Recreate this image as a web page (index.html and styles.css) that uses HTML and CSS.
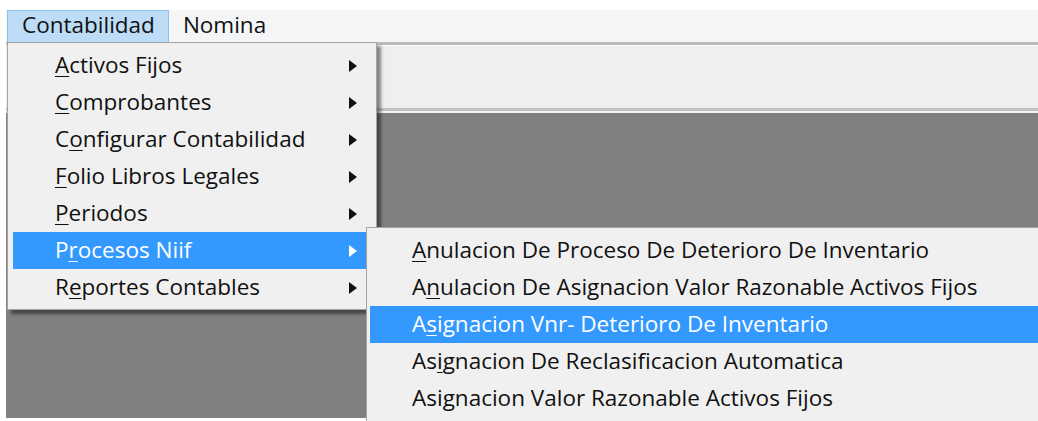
FILE: index.html
```html
<!DOCTYPE html>
<html lang="es">
<head>
<meta charset="utf-8">
<title>Contabilidad</title>
<link rel="stylesheet" href="styles.css">
</head>
<body>
<div class="app">
  <div class="menubar">
    <span class="mb-item active">Contabilidad</span>
    <span class="mb-item">Nomina</span>
  </div>
  <div class="toolbar"></div>
  <div class="workspace"></div>
</div>

<ul class="menu main-menu">
  <li class="item has-sub"><span><u>A</u>ctivos Fijos</span><i class="arrow"></i></li>
  <li class="item has-sub"><span><u>C</u>omprobantes</span><i class="arrow"></i></li>
  <li class="item has-sub"><span>C<u>o</u>nfigurar Contabilidad</span><i class="arrow"></i></li>
  <li class="item has-sub"><span><u>F</u>olio Libros Legales</span><i class="arrow"></i></li>
  <li class="item has-sub"><span><u>P</u>eriodos</span><i class="arrow"></i></li>
  <li class="item has-sub selected"><span>P<u>r</u>ocesos Niif</span><i class="arrow"></i></li>
  <li class="item has-sub"><span>R<u>e</u>portes Contables</span><i class="arrow"></i></li>
</ul>

<ul class="menu sub-menu">
  <li class="item"><span><u>A</u>nulacion De Proceso De Deterioro De Inventario</span></li>
  <li class="item"><span>A<u>n</u>ulacion De Asignacion Valor Razonable Activos Fijos</span></li>
  <li class="item selected"><span>A<u>s</u>ignacion Vnr- Deterioro De Inventario</span></li>
  <li class="item"><span>As<u>i</u>gnacion De Reclasificacion Automatica</span></li>
  <li class="item"><span>Asi<u>g</u>nacion Valor Razonable Activos Fijos</span></li>
</ul>
</body>
</html>
```

FILE: styles.css
```css
html, body {
  margin: 0;
  padding: 0;
  height: 100%;
  overflow: hidden;
  background: #ffffff;
  font-family: "Open Sans", "Noto Sans", sans-serif;
  font-size: 22.5px;
  color: #111111;
}

.app {
  margin: 10px 0 0 6px;
  height: calc(100% - 13px);
  display: flex;
  flex-direction: column;
}

/* menu bar */
.menubar {
  height: 32px;
  background: #f4f5f7;
  display: flex;
  align-items: stretch;
}

.mb-item {
  display: flex;
  align-items: center;
  padding: 0 14px 2px;
  line-height: 1;
}

.mb-item.active {
  background: #bcdcf7;
  border: 1px solid #94bfe8;
  border-bottom: none;
  margin-left: 1px;
  padding: 0 13px 2px 14px;
}

/* toolbar strip */
.toolbar {
  height: 63px;
  background: #efefef;
  border-top: 3px solid #bababa;
  box-shadow: inset 0 1px 0 #fbfbfb;
  border-bottom: 3px solid #c2c2c2;
}

.workspace {
  flex: 1;
  background: #808080;
  border-top: 2px solid #f4f4f4;
}

/* drop-down menus */
.menu {
  position: absolute;
  margin: 0;
  list-style: none;
  background: #f0f0f0;
  border: 1px solid #a3a3a3;
  box-shadow: 4px 4px 3px rgba(0, 0, 0, 0.45);
}

.main-menu {
  left: 7px;
  top: 42px;
  width: 353px;
  padding: 4px 10px 3px 5px;
}

.sub-menu {
  left: 366px;
  right: 0;
  top: 227px;
  border-right: none;
  padding: 4px 0 4px 3px;
}

.item {
  height: 37px;
  box-sizing: border-box;
  display: flex;
  align-items: center;
  justify-content: space-between;
  padding: 0 9px 3px 42px;
  white-space: nowrap;
}

.item u {
  text-decoration-thickness: 1px;
  text-underline-offset: 3px;
}

.item.selected {
  background: #3399ff;
  color: #ffffff;
}

.arrow {
  width: 0;
  height: 0;
  margin-top: 3px;
  border-left: 8px solid #111111;
  border-top: 6px solid transparent;
  border-bottom: 6px solid transparent;
}

.selected .arrow {
  border-left-color: #ffffff;
}
```
